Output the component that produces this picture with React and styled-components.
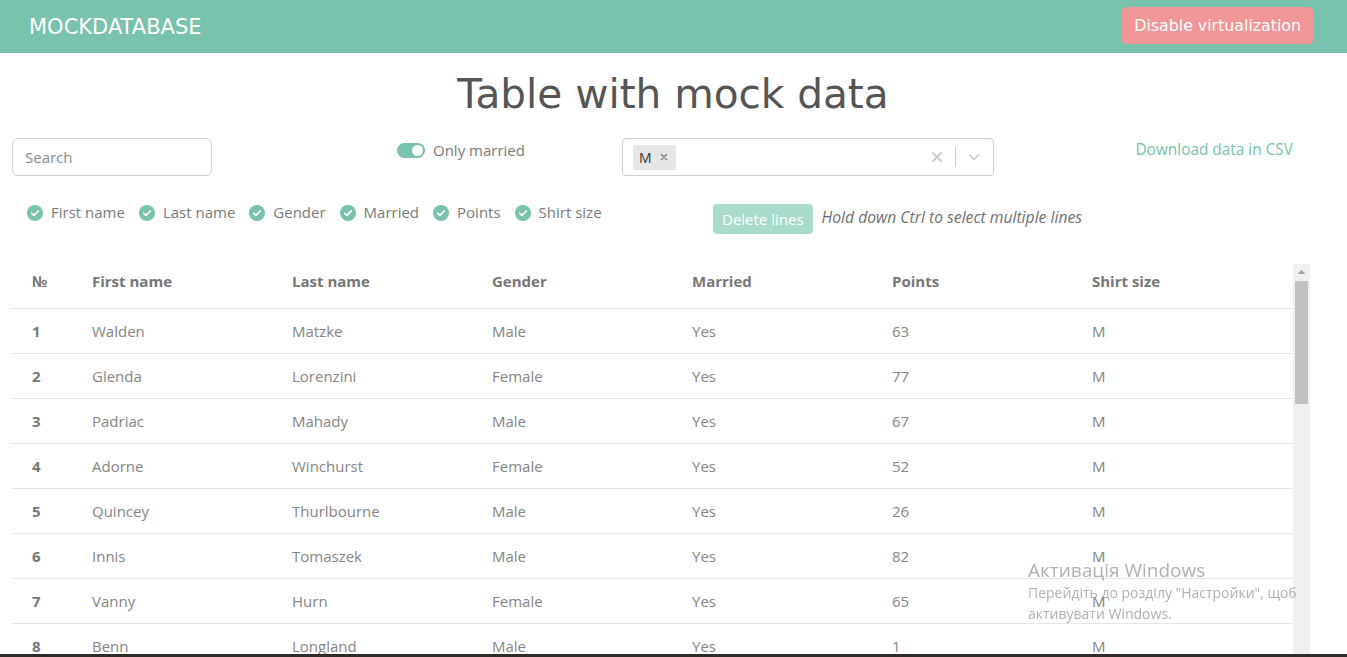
import React from 'react';
import styled, { createGlobalStyle } from 'styled-components';

const GlobalStyle = createGlobalStyle`
  body {
    margin: 0;
    overflow: hidden;
    background: #fff;
    font-family: 'Open Sans', 'Liberation Sans', sans-serif;
  }
`;

const rows = [
  [1, 'Walden', 'Matzke', 'Male', 'Yes', 63, 'M'],
  [2, 'Glenda', 'Lorenzini', 'Female', 'Yes', 77, 'M'],
  [3, 'Padriac', 'Mahady', 'Male', 'Yes', 67, 'M'],
  [4, 'Adorne', 'Winchurst', 'Female', 'Yes', 52, 'M'],
  [5, 'Quincey', 'Thurlbourne', 'Male', 'Yes', 26, 'M'],
  [6, 'Innis', 'Tomaszek', 'Male', 'Yes', 82, 'M'],
  [7, 'Vanny', 'Hurn', 'Female', 'Yes', 65, 'M'],
  [8, 'Benn', 'Longland', 'Male', 'Yes', 1, 'M'],
  [9, 'Carlin', 'Edgeson', 'Male', 'Yes', 44, 'M'],
];

const columns = ['First name', 'Last name', 'Gender', 'Married', 'Points', 'Shirt size'];

const CheckIcon = () => (
  <svg width="16" height="16" viewBox="0 0 16 16">
    <circle cx="8" cy="8" r="8" fill="#79c2ad" />
    <path d="M4.8 8.3l2.2 2.1 4.2-4.4" fill="none" stroke="#fff" strokeWidth="1.8" strokeLinecap="round" strokeLinejoin="round" />
  </svg>
);

const App = () => {
  return (
    <>
      <GlobalStyle />
      <Header>
        <Logo>MOCKDATABASE</Logo>
        <PinkButton>Disable virtualization</PinkButton>
      </Header>
      <Main>
        <Title>Table with mock data</Title>
        <Controls>
          <SearchInput placeholder="Search" />
          <ToggleLabel>
            <Toggle><Knob /></Toggle>
            Only married
          </ToggleLabel>
          <SelectBox>
            <Chip>
              M
              <svg width="8" height="8" viewBox="0 0 8 8">
                <path d="M1.5 1.5l5 5M6.5 1.5l-5 5" stroke="#777" strokeWidth="1.4" strokeLinecap="round" />
              </svg>
            </Chip>
            <Indicators>
              <svg width="14" height="14" viewBox="0 0 14 14">
                <path d="M3 3l8 8M11 3l-8 8" stroke="#ccc" strokeWidth="2" strokeLinecap="round" />
              </svg>
              <Separator />
              <svg width="14" height="14" viewBox="0 0 14 14">
                <path d="M2.5 5l4.5 4.5L11.5 5" fill="none" stroke="#ccc" strokeWidth="1.6" strokeLinecap="round" strokeLinejoin="round" />
              </svg>
            </Indicators>
          </SelectBox>
          <DownloadLink>Download data in CSV</DownloadLink>
        </Controls>
        <SecondRow>
          <ColumnChecks>
            {columns.map((c) => (
              <CheckItem key={c}>
                <CheckIcon />
                {c}
              </CheckItem>
            ))}
          </ColumnChecks>
          <DeleteArea>
            <DeleteButton disabled>Delete lines</DeleteButton>
            <Hint>Hold down Ctrl to select multiple lines</Hint>
          </DeleteArea>
        </SecondRow>
        <TableArea>
          <TableClip>
            <Table>
              <colgroup>
                <col style={{ width: 60 }} />
                <col style={{ width: 200 }} />
                <col style={{ width: 200 }} />
                <col style={{ width: 200 }} />
                <col style={{ width: 200 }} />
                <col style={{ width: 200 }} />
                <col />
              </colgroup>
              <thead>
                <tr>
                  <Th>№</Th>
                  {columns.map((c) => (
                    <Th key={c}>{c}</Th>
                  ))}
                </tr>
              </thead>
              <tbody>
                {rows.map((r) => (
                  <tr key={r[0]}>
                    {r.map((v, i) => (
                      <Td key={i} $num={i === 0}>{v}</Td>
                    ))}
                  </tr>
                ))}
              </tbody>
            </Table>
          </TableClip>
          <ScrollTrack>
            <ScrollArrow>
              <svg width="17" height="17" viewBox="0 0 17 17">
                <path d="M4.5 10h8l-4-4z" fill="#a3a3a3" />
              </svg>
            </ScrollArrow>
            <ScrollThumb />
          </ScrollTrack>
        </TableArea>
      </Main>
      <Watermark>
        <WatermarkTitle>Активація Windows</WatermarkTitle>
        <WatermarkText>Перейдіть до розділу "Настройки", щоб</WatermarkText>
        <WatermarkText>активувати Windows.</WatermarkText>
      </Watermark>
      <Taskbar />
    </>
  );
};

const Header = styled.header`
  display: flex;
  align-items: center;
  justify-content: space-between;
  height: 53px;
  padding: 0 33px 0 29px;
  background-color: #79c2ad;
`;

const Logo = styled.div`
  font-family: 'DejaVu Sans', sans-serif;
  font-size: 21px;
  color: #fff;
`;

const PinkButton = styled.button`
  height: 37px;
  margin-bottom: 2px;
  padding: 0 13px;
  border: none;
  border-radius: 6px;
  background-color: #f19697;
  color: #fff;
  font-family: 'DejaVu Sans', sans-serif;
  font-size: 15.8px;
`;

const Main = styled.main`
  padding-left: 12px;
`;

const Title = styled.h1`
  margin: 17px 0 20px;
  width: 1322px;
  text-align: center;
  font-family: 'DejaVu Sans', sans-serif;
  font-size: 40.6px;
  line-height: 48px;
  font-weight: 400;
  color: #555;
`;

const Controls = styled.div`
  display: grid;
  grid-template-columns: 385px 225px 372px 1fr;
  align-items: start;
  width: 1281px;
  height: 38px;
`;

const SearchInput = styled.input`
  box-sizing: border-box;
  width: 200px;
  height: 38px;
  padding: 0 12px;
  border: 1px solid #cfcfcf;
  border-radius: 6px;
  font-family: 'Open Sans', sans-serif;
  font-size: 15px;
  outline: none;
  &::placeholder {
    color: #8a8a8a;
  }
`;

const ToggleLabel = styled.label`
  display: flex;
  align-items: center;
  gap: 8px;
  padding-top: 1px;
  line-height: 22px;
  font-size: 15px;
  color: #7a7a7a;
`;

const Toggle = styled.span`
  display: flex;
  justify-content: flex-end;
  align-items: center;
  box-sizing: border-box;
  width: 28px;
  height: 15px;
  padding: 2px;
  border-radius: 8px;
  background-color: #79c2ad;
`;

const Knob = styled.span`
  width: 11px;
  height: 11px;
  border-radius: 50%;
  background: #fff;
`;

const SelectBox = styled.div`
  box-sizing: border-box;
  display: flex;
  align-items: center;
  justify-content: space-between;
  height: 38px;
  padding: 0 12px 0 10px;
  border: 1px solid #cfcfcf;
  border-radius: 4px;
`;

const Chip = styled.span`
  display: flex;
  align-items: center;
  gap: 8px;
  height: 25px;
  padding: 0 8px 0 6px;
  border-radius: 2px;
  background-color: #e6e6e6;
  font-size: 14px;
  color: #333;
`;

const Indicators = styled.div`
  display: flex;
  align-items: center;
  gap: 11px;
`;

const Separator = styled.span`
  width: 1px;
  height: 20px;
  background-color: #ccc;
`;

const DownloadLink = styled.a`
  justify-self: end;
  padding-top: 1px;
  line-height: 22px;
  font-size: 15.4px;
  color: #79c2ad;
  cursor: pointer;
`;

const SecondRow = styled.div`
  display: grid;
  grid-template-columns: 701px 1fr;
  align-items: start;
  margin-top: 28px;
  height: 30px;
`;

const ColumnChecks = styled.div`
  display: flex;
  gap: 14px;
  padding-left: 15px;
`;

const CheckItem = styled.span`
  display: flex;
  align-items: center;
  gap: 8px;
  line-height: 17px;
  font-size: 15px;
  color: #7a7a7a;
`;

const DeleteArea = styled.div`
  display: flex;
  align-items: center;
  gap: 9px;
`;

const DeleteButton = styled.button`
  height: 30px;
  padding: 0 9px;
  border: none;
  border-radius: 4px;
  background-color: #a8dbcb;
  color: #fff;
  font-family: 'Open Sans', sans-serif;
  font-size: 15px;
`;

const Hint = styled.span`
  padding-bottom: 5px;
  font-size: 15.7px;
  font-style: italic;
  color: #6f6f6f;
`;

const TableArea = styled.div`
  display: flex;
  margin-top: 30px;
  width: 1298px;
  height: 420px;
`;

const TableClip = styled.div`
  flex: 1;
  overflow: hidden;
`;

const ScrollTrack = styled.div`
  display: flex;
  flex-direction: column;
  align-items: center;
  width: 17px;
  background-color: #f0f0f0;
`;

const ScrollArrow = styled.div`
  height: 17px;
`;

const ScrollThumb = styled.div`
  width: 13px;
  height: 123px;
  background-color: #c1c1c1;
`;

const Table = styled.table`
  width: 1281px;
  table-layout: fixed;
  border-collapse: collapse;
  font-size: 15px;
`;

const Th = styled.th`
  height: 44px;
  padding: 7px 0 0 20px;
  box-sizing: border-box;
  vertical-align: top;
  line-height: 20px;
  border-bottom: 1px solid #e6e6e6;
  text-align: left;
  font-weight: 700;
  color: #777;
`;

const Td = styled.td`
  height: 44px;
  padding: 0 0 0 20px;
  border-bottom: 1px solid #e6e6e6;
  color: ${(p) => (p.$num ? '#777' : '#858585')};
  font-weight: ${(p) => (p.$num ? 700 : 400)};
`;

const Watermark = styled.div`
  position: fixed;
  left: 1028px;
  top: 558px;
  font-family: 'Open Sans', sans-serif;
  color: rgba(150, 150, 150, 0.75);
  pointer-events: none;
`;

const WatermarkTitle = styled.div`
  font-size: 19px;
  line-height: 24px;
`;

const WatermarkText = styled.div`
  font-size: 14px;
  line-height: 21px;
`;

const Taskbar = styled.div`
  position: fixed;
  left: 0;
  right: 0;
  bottom: 0;
  height: 3px;
  background-color: #2f2b29;
`;

export default App;
